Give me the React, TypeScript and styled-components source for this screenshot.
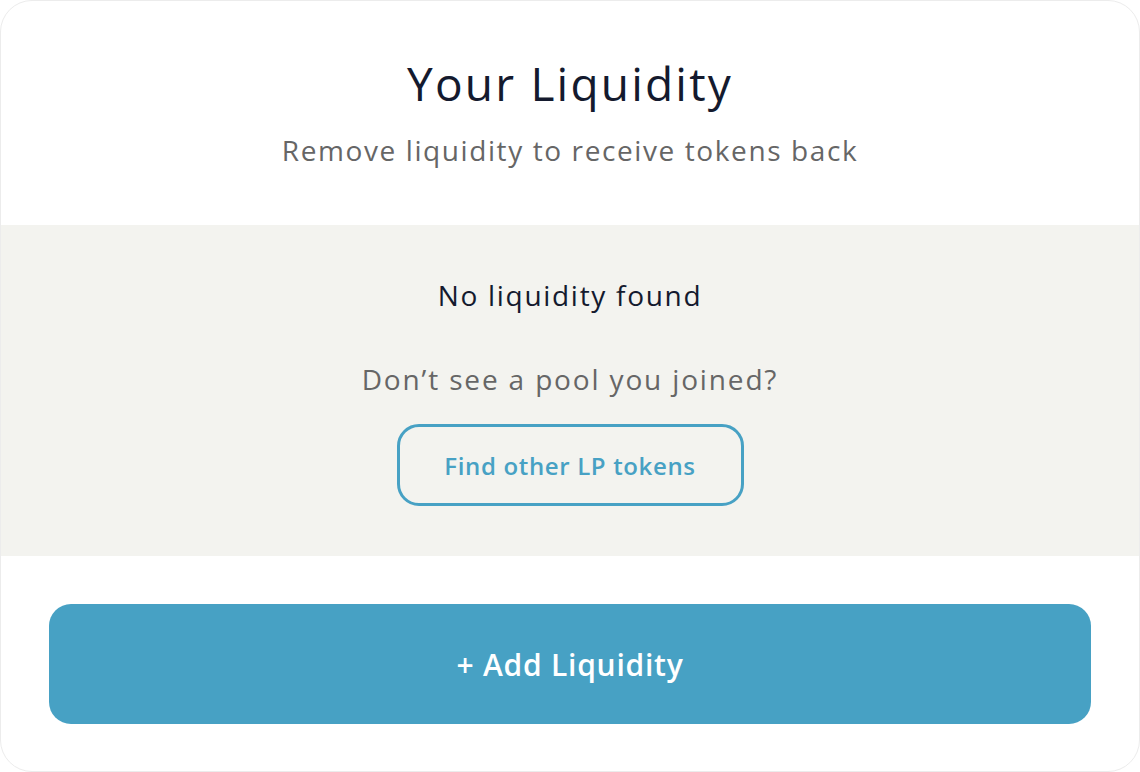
import React from "react";
import styled, { createGlobalStyle } from "styled-components";

const Global = createGlobalStyle`
  html, body { margin: 0; padding: 0; background: #ffffff; }
  body { font-family: "Open Sans", Lato, sans-serif; }
  * { box-sizing: border-box; }
`;

const Card = styled.div`
  width: 1140px;
  height: 772px;
  border: 1px solid #ececec;
  border-radius: 32px;
  background: #ffffff;
  overflow: hidden;
  display: flex;
  flex-direction: column;
`;

const Header = styled.div`
  display: flex;
  flex-direction: column;
  align-items: center;
  padding-top: 50px;
  height: 224px;
`;

const Title = styled.h1`
  margin: 0;
  font-size: 46px;
  font-weight: 400;
  letter-spacing: 2.2px;
  color: #141a2e;
  line-height: 64px;
`;

const Subtitle = styled.p`
  margin: 17px 0 0;
  font-size: 28px;
  letter-spacing: 1.6px;
  color: #666666;
  line-height: 36px;
`;

const Body = styled.div`
  background: #f3f3ef;
  height: 331px;
  display: flex;
  flex-direction: column;
  align-items: center;
  padding-top: 52px;
`;

const Empty = styled.p`
  margin: 0;
  font-size: 28px;
  letter-spacing: 1.7px;
  color: #141a2e;
  line-height: 36px;
`;

const Hint = styled.p`
  margin: 48px 0 0;
  font-size: 28px;
  letter-spacing: 1.85px;
  color: #666666;
  line-height: 36px;
`;

const OutlineButton = styled.button`
  margin-top: 27px;
  width: 347px;
  height: 82px;
  border: 3px solid #47a1c4;
  border-radius: 22px;
  background: transparent;
  color: #47a1c4;
  font-family: "Open Sans", sans-serif;
  font-weight: 600;
  font-size: 24px;
  letter-spacing: 0.65px;
`;

const Footer = styled.div`
  flex: 1;
  padding: 48px 48px 0;
`;

const PrimaryButton = styled.button`
  width: 100%;
  height: 120px;
  border: none;
  border-radius: 22px;
  background: #47a1c4;
  color: #ffffff;
  font-family: "Open Sans", sans-serif;
  font-weight: 600;
  font-size: 30px;
  letter-spacing: 0.75px;
`;

export default function App() {
  return (
    <>
      <Global />
      <Card>
        <Header>
          <Title>Your Liquidity</Title>
          <Subtitle>Remove liquidity to receive tokens back</Subtitle>
        </Header>
        <Body>
          <Empty>No liquidity found</Empty>
          <Hint>Don’t see a pool you joined?</Hint>
          <OutlineButton>Find other LP tokens</OutlineButton>
        </Body>
        <Footer>
          <PrimaryButton>+ Add Liquidity</PrimaryButton>
        </Footer>
      </Card>
    </>
  );
}
